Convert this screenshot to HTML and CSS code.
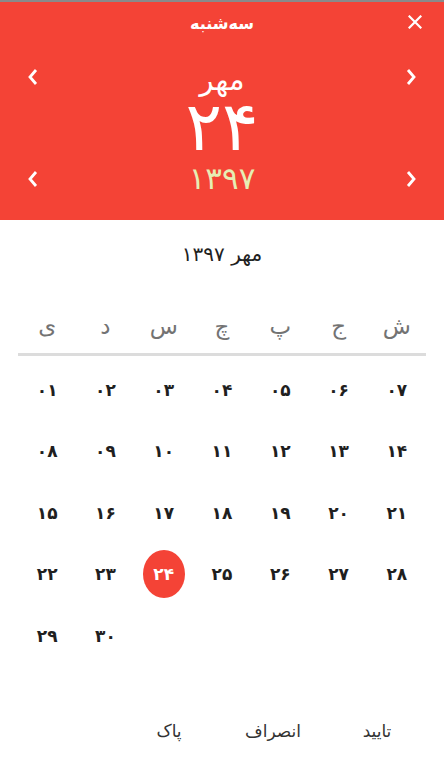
FILE: index.html
```html
<!DOCTYPE html>
<html lang="fa">
<head>
<meta charset="utf-8">
<link rel="stylesheet" href="styles.css">
</head>
<body>
<div class="picker">
  <header class="head">
    <div class="topbar">
      <span class="weekday">سه‌شنبه</span>
      <span class="close" aria-label="close">
        <svg width="14" height="14" viewBox="0 0 14 14"><path d="M1.5 1.5 L12.5 12.5 M12.5 1.5 L1.5 12.5" stroke="#fff" stroke-width="2.2" stroke-linecap="square"/></svg>
      </span>
    </div>
    <div class="main">
      <span class="arrow a-month-prev"><svg width="12" height="18" viewBox="0 0 12 18"><path d="M9 2 L3 9 L9 16" fill="none" stroke="#fff" stroke-width="2.8"/></svg></span>
      <div class="month">مهر</div>
      <span class="arrow a-month-next"><svg width="12" height="18" viewBox="0 0 12 18"><path d="M3 2 L9 9 L3 16" fill="none" stroke="#fff" stroke-width="2.8"/></svg></span>
      <div class="day">۲۴</div>
      <span class="arrow a-year-prev"><svg width="12" height="18" viewBox="0 0 12 18"><path d="M9 2 L3 9 L9 16" fill="none" stroke="#fff" stroke-width="2.8"/></svg></span>
      <div class="year">۱۳۹۷</div>
      <span class="arrow a-year-next"><svg width="12" height="18" viewBox="0 0 12 18"><path d="M3 2 L9 9 L3 16" fill="none" stroke="#fff" stroke-width="2.8"/></svg></span>
    </div>
  </header>
  <section class="body">
    <div class="caption">مهر ۱۳۹۷</div>
    <div class="weekdays">
      <span>ش</span><span>ج</span><span>پ</span><span>چ</span><span>س</span><span>د</span><span>ی</span>
    </div>
    <div class="days">
      <span>۰۱</span><span>۰۲</span><span>۰۳</span><span>۰۴</span><span>۰۵</span><span>۰۶</span><span>۰۷</span>
      <span>۰۸</span><span>۰۹</span><span>۱۰</span><span>۱۱</span><span>۱۲</span><span>۱۳</span><span>۱۴</span>
      <span>۱۵</span><span>۱۶</span><span>۱۷</span><span>۱۸</span><span>۱۹</span><span>۲۰</span><span>۲۱</span>
      <span>۲۲</span><span>۲۳</span><span class="sel"><b>۲۴</b></span><span>۲۵</span><span>۲۶</span><span>۲۷</span><span>۲۸</span>
      <span>۲۹</span><span>۳۰</span>
    </div>
  </section>
  <footer class="actions">
    <span class="btn">تایید</span>
    <span class="btn">انصراف</span>
    <span class="btn">پاک</span>
  </footer>
</div>
</body>
</html>
```

FILE: styles.css
```css
html, body {
  margin: 0;
  padding: 0;
  background: #fff;
}
body {
  font-family: "DejaVu Sans", "Noto Sans", sans-serif;
}
.picker {
  width: 444px;
  height: 781px;
  display: flex;
  flex-direction: column;
  border-top: 2px solid #8a8a8a;
  box-sizing: border-box;
}
.head {
  background: #f44336;
  color: #fff;
  height: 218px;
  display: flex;
  flex-direction: column;
}
.topbar {
  height: 42px;
  display: flex;
  align-items: center;
  justify-content: center;
  position: relative;
}
.weekday {
  font-size: 16px;
  font-weight: bold;
  direction: rtl;
}
.close {
  position: absolute;
  right: 22px;
  top: 13px;
  display: flex;
}
.main {
  display: grid;
  grid-template-columns: 66px 1fr 66px;
  grid-template-rows: 38px 59px 48px;
  align-items: center;
  justify-items: center;
  margin-top: 14px;
}
.arrow { display: flex; }
.a-month-prev { grid-column: 1; grid-row: 1; }
.a-month-next { grid-column: 3; grid-row: 1; }
.a-year-prev { grid-column: 1; grid-row: 3; }
.a-year-next { grid-column: 3; grid-row: 3; }
.month {
  grid-column: 2; grid-row: 1;
  font-size: 29px;
  line-height: 30px;
  direction: rtl;
  margin-top: 6px;
}
.day {
  grid-column: 2; grid-row: 2;
  font-size: 68px;
  line-height: 50px;
  margin-top: 2px;
}
.year {
  grid-column: 2; grid-row: 3;
  font-size: 31px;
  line-height: 34px;
  color: #e6eeb4;
  margin-top: -2px;
}
.body {
  padding: 0 18px;
  display: flex;
  flex-direction: column;
}
.caption {
  text-align: center;
  direction: rtl;
  font-size: 20px;
  color: #212121;
  margin-top: 22px;
  height: 28px;
}
.weekdays {
  margin-top: 38px;
  display: grid;
  grid-template-columns: repeat(7, 1fr);
  direction: rtl;
  border-bottom: 3px solid #dcdcdc;
  height: 45px;
  align-items: center;
}
.weekdays span {
  text-align: center;
  font-size: 23px;
  color: #737373;
  line-height: 1;
  margin-top: -8px;
}
.days {
  display: grid;
  grid-template-columns: repeat(7, 1fr);
  grid-auto-rows: 61.5px;
  margin-top: 3px;
  align-items: center;
  justify-items: center;
}
.days span {
  font-size: 17px;
  font-weight: bold;
  color: #1f1f1f;
  display: flex;
  align-items: center;
  justify-content: center;
}
.days .sel b {
  width: 42px;
  height: 48px;
  border-radius: 50%;
  background: #f44336;
  color: #fff;
  display: flex;
  align-items: center;
  justify-content: center;
}
.actions {
  margin-top: auto;
  height: 60px;
  display: flex;
  direction: rtl;
  padding-right: 15px;
  align-items: flex-start;
}
.btn {
  font-size: 17px;
  color: #333;
  width: 104px;
  text-align: center;
}
```
